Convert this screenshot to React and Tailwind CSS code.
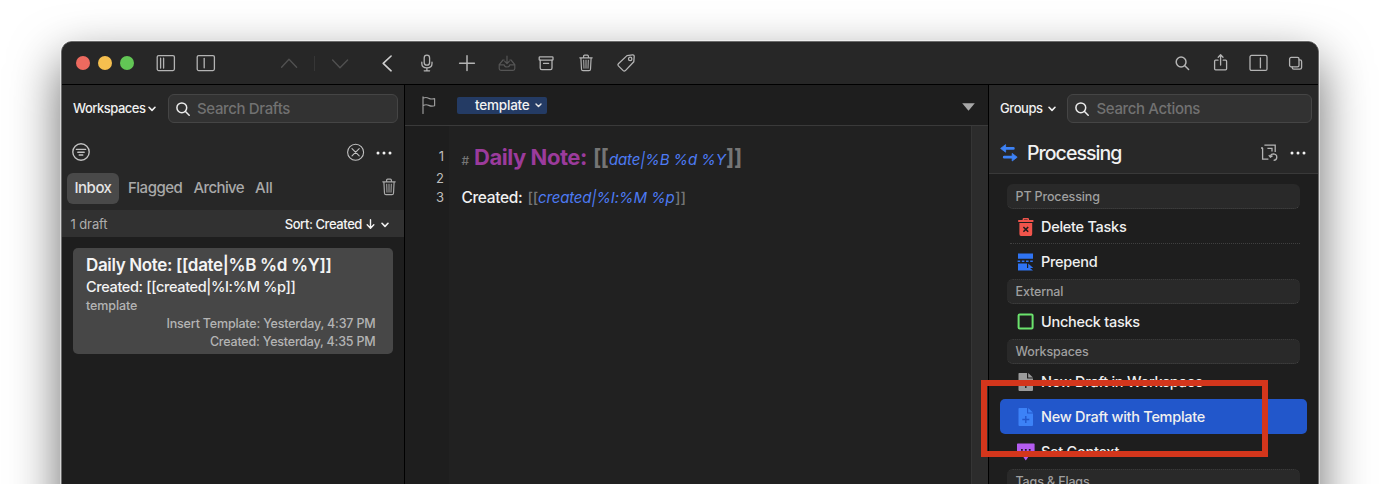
import React from "react";

function Icon({ w = 20, h = 20, className = "", sw = 1.3, children }) {
  return (
    <svg
      width={w}
      height={h}
      viewBox={`0 0 ${w} ${h}`}
      fill="none"
      stroke="currentColor"
      strokeWidth={sw}
      strokeLinecap="round"
      strokeLinejoin="round"
      className={`block shrink-0 ${className}`}
    >
      {children}
    </svg>
  );
}

function SearchIcon({ className, sw = 1.5 }) {
  return (
    <Icon w={14} h={14} sw={sw} className={className}>
      <circle cx="5.8" cy="5.8" r="4.9" />
      <path d="M9.5 9.5 13.2 13.2" />
    </Icon>
  );
}

function SmallChevron({ className }) {
  return (
    <Icon w={8} h={6} sw={1.6} className={className}>
      <path d="M1 1.3 4 4.4 7 1.3" />
    </Icon>
  );
}

function TrashIcon({ className, sw = 1.2 }) {
  return (
    <Icon className={className} sw={sw}>
      <path d="M3.8 4.8H16.2M7.6 4.6V3.2Q7.6 2.2 8.6 2.2H11.4Q12.4 2.2 12.4 3.2V4.6M4.9 5 5.5 16.2Q5.6 17.6 7 17.6H13Q14.4 17.6 14.5 16.2L15.1 5" />
      <path d="M7.7 7.2 8 15.2M10 7.2V15.2M12.3 7.2 12 15.2" strokeWidth="1" />
    </Icon>
  );
}

function Dots({ className }) {
  return (
    <svg width="16" height="4" viewBox="0 0 16 4" fill="#f2f2f2" className={`block shrink-0 ${className}`}>
      <circle cx="2" cy="2" r="1.5" />
      <circle cx="8" cy="2" r="1.5" />
      <circle cx="14" cy="2" r="1.5" />
    </svg>
  );
}

function Toolbar() {
  return (
    <div className="flex h-[42px] shrink-0 items-center bg-[#272727] pl-[14px] pr-[12px] text-[#b4b4b4]">
      <div className="flex gap-[8.5px]">
        <span className="size-[13.5px] rounded-full bg-[#ed6a5f]" />
        <span className="size-[13.5px] rounded-full bg-[#f5bf4f]" />
        <span className="size-[13.5px] rounded-full bg-[#62c655]" />
      </div>
      <Icon className="ml-[22.5px]">
        <rect x="1.2" y="2.6" width="17.2" height="15" rx="1.5" />
        <path d="M4.6 5.2V15M7.6 5.2V15" />
      </Icon>
      <Icon className="ml-[19.5px]">
        <rect x="1.2" y="2.6" width="17.2" height="15" rx="1.5" />
        <path d="M8.2 5.4V14.8" />
      </Icon>
      <Icon className="ml-[63.5px] text-[#505050]" sw={1.4}>
        <path d="M2.6 14.2 10 6.2 17.6 14.2" />
      </Icon>
      <span className="ml-[15px] h-[15px] w-px bg-[#363636]" />
      <Icon className="ml-[14.5px] text-[#505050]" sw={1.4}>
        <path d="M2.6 7 10 14.8 17.6 7" />
      </Icon>
      <Icon className="ml-[27px] text-[#cfcfcf]" sw={1.6}>
        <path d="M14.1 3 6.2 10.4 14.1 17.8" />
      </Icon>
      <Icon className="ml-[20.8px]">
        <rect x="7.2" y="2.2" width="5.4" height="10" rx="2.7" />
        <path d="M4.8 9.2V10.4Q4.8 14.8 9.9 14.8T15 10.4V9.2M9.9 14.8V17.8M7.2 17.8H12.6" />
      </Icon>
      <Icon className="ml-[19.7px]" sw={1.5}>
        <path d="M2.6 10.2H17.4M10 2.8V17.6" />
      </Icon>
      <Icon className="ml-[19.8px] text-[#555]" sw={1.2}>
        <path d="M7.2 7H6L2.2 11.6V15.6Q2.2 17.4 4 17.4H16Q17.8 17.4 17.8 15.6V11.6L14 7H12.8M2.2 11.8H7.2Q7.6 14 10 14T12.8 11.8H17.8M10 3V10.4M7.8 8.4 10 10.6 12.2 8.4" />
      </Icon>
      <Icon className="ml-[19.5px]">
        <rect x="3.2" y="3.8" width="13.8" height="3.4" rx="0.8" />
        <path d="M4.2 7.2V15Q4.2 16.6 5.8 16.6H14.4Q16 16.6 16 15V7.2M7.6 10.4H12.6" />
      </Icon>
      <TrashIcon className="ml-[20.2px]" />
      <Icon className="ml-[19.5px]">
        <path d="M11 2.6 16.6 1.9Q18.2 1.8 18.2 3.4L17.8 8.8 9.4 17.6Q8.2 18.6 7.2 17.6L2.4 12.9Q1.4 11.8 2.4 10.8Z" />
        <circle cx="14.2" cy="5.9" r="1.7" />
      </Icon>
      <div className="flex-1" />
      <Icon sw={1.5}>
        <circle cx="8.1" cy="9" r="4.9" />
        <path d="M11.8 12.7 15.6 16.5" />
      </Icon>
      <Icon className="ml-[18px]">
        <path d="M7 7.2H4.6Q3.6 7.2 3.6 8.2V15.8Q3.6 16.8 4.6 16.8H14.6Q15.6 16.8 15.6 15.8V8.2Q15.6 7.2 14.6 7.2H12.2M9.6 12V1.8M7.2 4.2 9.6 1.8 12 4.2" />
      </Icon>
      <Icon className="ml-[18px]">
        <rect x="1" y="2.4" width="17" height="15" rx="1.5" />
        <path d="M11.4 5V14.8" />
      </Icon>
      <Icon className="ml-[17px]">
        <rect x="3.6" y="4.4" width="9.4" height="9.4" rx="1.6" />
        <path d="M6.2 13.8V14.6Q6.2 16.2 7.8 16.2H13.8Q15.6 16.2 15.6 14.4V8.4Q15.6 6.8 14 6.8H13" />
      </Icon>
    </div>
  );
}

function SearchField({ label, className }) {
  return (
    <div
      className={`flex h-[29px] items-center rounded-[6px] border border-[#454545] bg-[#323232] pl-[7px] text-[15px] text-[#717171] ${className}`}
    >
      <SearchIcon className="mt-px mr-[7.5px] text-[#ececec]" />
      <span className="mt-[2px] font-[450] tracking-[-0.36px] whitespace-nowrap">{label}</span>
    </div>
  );
}

function DraftsPanel() {
  return (
    <div className="flex w-[342px] shrink-0 flex-col bg-[#1e1e1e]">
      <div className="flex h-[125px] shrink-0 flex-col bg-[#272727]">
        <div className="flex h-[46px] items-center pl-[11px] pr-[6px]">
          <span className="mt-[2px] w-[75px] text-[13px] font-medium tracking-[-0.5px] text-[#f0f0f0]">Workspaces</span>
          <SmallChevron className="mt-[2px] text-[#eee]" />
          <SearchField label="Search Drafts" className="ml-[11.5px] flex-1" />
        </div>
        <div className="flex h-[42px] items-center pl-[9px] pr-[12px] text-[#c0c0c0]">
          <Icon className="-mt-px" sw={1.4}>
            <circle cx="10" cy="10" r="8.2" />
            <path d="M5.4 7.4H14.6M6.8 10.2H13.2M8.2 13H11.8" />
          </Icon>
          <div className="flex-1" />
          <Icon className="mr-[10px]" sw={1.1}>
            <circle cx="9.6" cy="10.3" r="8" />
            <path d="M6 6.7 13.2 13.9M13.2 6.7 6 13.9" />
          </Icon>
          <Dots className="mt-[2px]" />
        </div>
        <div className="flex h-[31px] items-center pl-[5px] pr-[5px] text-[15px] font-[450] text-[#a9a9a9]">
          <span className="flex h-[31px] w-[52px] items-center justify-center rounded-[6px] bg-[#494949] tracking-[-0.5px] text-[#e4e4e4]">
            Inbox
          </span>
          <span className="ml-[9px] w-[65.5px] tracking-[-0.5px]">Flagged</span>
          <span className="w-[61.5px] tracking-[-0.6px]">Archive</span>
          <span className="tracking-[-0.2px]">All</span>
          <div className="flex-1" />
          <TrashIcon className="-mt-1" />
        </div>
      </div>
      <div className="flex h-[27px] shrink-0 items-center bg-[#313131] pl-[8.5px] pr-[15px] text-[13px]">
        <span className="mt-[2px] tracking-[-0.1px] text-[#adadad]">1 draft</span>
        <div className="flex-1" />
        <span className="mt-[2px] font-medium tracking-[-0.42px] text-[#f4f4f4]">Sort: Created</span>
        <Icon w={9} h={10} sw={1.4} className="ml-[4px] mr-[6px] text-[#f4f4f4]">
          <path d="M4.5 0.8V9M1.2 5.8 4.5 9.2 7.8 5.8" />
        </Icon>
        <SmallChevron className="mt-[2px] text-[#eee]" />
      </div>
      <div className="mt-[11px] ml-[11px] flex h-[106px] w-[320px] flex-col rounded-[5px] bg-[#474747] pt-[6px] pl-[13px] pr-[17.5px]">
        <span className="h-[22px] text-[17px] leading-[22px] font-semibold tracking-[-0.35px] whitespace-nowrap text-[#f4f4f4]">
          Daily Note: [[date|%B %d %Y]]
        </span>
        <span className="h-[21px] text-[14.5px] leading-[22px] font-[450] tracking-[-0.36px] whitespace-nowrap text-[#f4f4f4]">
          Created: [[created|%I:%M %p]]
        </span>
        <span className="h-[18px] text-[12.5px] leading-[17px] font-[450] tracking-[-0.1px] text-[#b4b4b4]">template</span>
        <span className="h-[17.5px] text-right text-[12.5px] leading-[17px] font-[450] tracking-[-0.19px] text-[#b4b4b4]">
          Insert Template: Yesterday, 4:37 PM
        </span>
        <span className="text-right text-[12.5px] leading-[17px] font-[450] tracking-[-0.2px] text-[#b4b4b4]">
          Created: Yesterday, 4:35 PM
        </span>
      </div>
    </div>
  );
}

function Editor() {
  return (
    <div className="flex w-[583px] shrink-0 flex-col bg-[#1e1e1e]">
      <div className="flex h-[41px] shrink-0 items-center border-b border-[#3a3a3a] pl-[16px] pr-[13px]">
        <Icon className="text-[#9a9a9a]" sw={1.2}>
          <path d="M2 1.8V18.4M2 3.2Q5 1.8 7.6 3.2T13.6 3.6V10.8Q10.6 11.8 7.8 10.4T2 10.6" />
        </Icon>
        <span className="ml-[16px] flex h-[17px] w-[90px] items-center rounded-[2px] bg-[#243b64] pl-[18px] text-[13.5px] font-medium tracking-[-0.2px] text-[#f2f2f2]">
          <span className="mt-px w-[60px]">template</span>
          <Icon w={7} h={5} sw={1.4} className="mt-px text-[#e4e4e4]">
            <path d="M1 1 3.5 3.6 6 1" />
          </Icon>
        </span>
        <div className="flex-1" />
        <svg width="13" height="8" viewBox="0 0 13 8" fill="#a8a8a8" className="mt-[3px] block">
          <path d="M0.2 0.2H12.8L6.5 7.8Z" />
        </svg>
      </div>
      <div className="flex flex-1">
        <div className="flex w-[44px] flex-col pt-[18px] pr-[5px] text-right text-[13px] text-[#bdbdbd]">
          <span className="h-[22px] leading-[24px]">1</span>
          <span className="h-[19px] leading-[24px]">2</span>
          <span className="leading-[24px]">3</span>
        </div>
        <div className="flex flex-1 flex-col bg-[#212121] pt-[14px] pl-[12.5px] text-[15px] font-[450] whitespace-pre">
          <div className="flex h-[46px] items-baseline leading-[34px]">
            <span className="w-[12.5px] text-[12px] text-[#767676]">#</span>
            <span className="w-[119px] text-[22px] font-bold tracking-[-0.45px] text-[#9b3b9c]">Daily Note:</span>
            <span className="w-[16px] text-[22px] font-bold tracking-[-0.8px] text-[#757575]">[[</span>
            <span className="w-[117px] tracking-[-0.15px] text-[#4d7bf3] italic">date|%B %d %Y</span>
            <span className="text-[22px] font-bold tracking-[-0.4px] text-[#757575]">]]</span>
          </div>
          <div className="flex items-baseline leading-[24px]">
            <span className="w-[66px] text-[15.5px] tracking-[-0.35px] text-[#f0f0f0]">Created:</span>
            <span className="w-[10.5px] tracking-[-0.3px] text-[#757575]">[[</span>
            <span className="w-[137px] tracking-[-0.15px] text-[#4d7bf3] italic">created|%I:%M %p</span>
            <span className="tracking-[-0.1px] text-[#757575]">]]</span>
          </div>
        </div>
        <div className="w-[17px] border-l border-[#353535] bg-[#2c2c2c]" />
      </div>
    </div>
  );
}

function SectionHeader({ label, first }) {
  return (
    <div
      className={`mx-[18px] flex h-[25px] items-center rounded-[6px] border-b border-dotted border-b-[#464646] bg-[#292929] pl-[8.5px] text-[12.5px] font-medium tracking-[-0.14px] text-[#9f9f9f] ${
        first ? "" : "border-t border-t-[#3a3a3a]"
      }`}
    >
      <span className="mt-[2px]">{label}</span>
    </div>
  );
}

function ActionRow({ icon, label, divider, selected, h = "h-[35px]" }) {
  return (
    <div className={`relative mx-[11px] flex items-center pt-[2px] pl-[16.5px] ${h} ${selected ? "rounded-[5px] bg-[#2257cb]" : ""}`}>
      {icon}
      <span className="-mt-px ml-[6.5px] text-[14.5px] font-[450] tracking-[-0.27px] whitespace-nowrap text-[#f0f0f0]">
        {label}
      </span>
      {divider && <span className="absolute right-[7px] bottom-0 left-[10px] border-b border-dotted border-[#404040]" />}
    </div>
  );
}

function Glyph({ children }) {
  return (
    <svg width="18" height="20" viewBox="0 0 18 20" className="-mt-px block shrink-0">
      {children}
    </svg>
  );
}

function DocGlyph({ fill, plus }) {
  return (
    <Glyph>
      <path d="M1.5 1.5Q1.5 1 2.2 1H10V6.6H16V18Q16 19 15 19H2.5Q1.5 19 1.5 18Z" fill={fill} />
      <path d="M11.2 1 16 5.5H11.2Z" fill={fill} />
      <path d="M8.8 9V16M5.3 12.5H12.3" stroke={plus} strokeWidth="1.4" />
    </Glyph>
  );
}

function ActionsPanel() {
  return (
    <div className="flex w-[329px] shrink-0 flex-col bg-[#1e1e1e]">
      <div className="flex h-[89px] shrink-0 flex-col border-b border-[#393939] bg-[#282828]">
        <div className="flex h-[46px] shrink-0 items-center pl-[11px] pr-[6px]">
          <span className="mt-[2px] w-[48px] text-[13px] font-medium tracking-[-0.42px] text-[#f0f0f0]">Groups</span>
          <SmallChevron className="mt-[2px] text-[#eee]" />
          <SearchField label="Search Actions" className="ml-[11px] flex-1" />
        </div>
        <div className="flex h-[42px] shrink-0 items-center pt-px pl-[11px] pr-[12px]">
          <svg width="18" height="18" viewBox="0 0 18 18" fill="none" stroke="#3d82f6" className="block">
            <path d="M5 4.4H13.4M4.2 13.2H12.6" strokeWidth="2.7" strokeLinecap="round" />
            <path d="M5.6 0.6V8.2L0.6 4.4ZM12.2 9.4V17L17.2 13.2Z" fill="#3d82f6" strokeWidth="0.8" strokeLinejoin="round" />
          </svg>
          <span className="mt-[2px] ml-[9px] text-[19.5px] font-medium tracking-[-0.95px] text-[#f2f2f2]">Processing</span>
          <div className="flex-1" />
          <svg width="18" height="18" viewBox="0 0 18 18" fill="none" stroke="#b4b4b4" strokeWidth="1.3" className="mr-[12px] block">
            <path d="M4.4 1.2H15.2V8M2.6 4V15.2H8.4M1 4H3M7.4 4.4H12V7.4" />
            <path d="M10.4 12.4Q10.8 9.9 13.5 9.9 16.8 10.2 16.8 13.2T13.6 16.4M8.8 11.2 10.4 13.2 12.6 11.8" />
          </svg>
          <Dots className="mt-px" />
        </div>
      </div>
      <div className="flex flex-col pt-[10px]">
        <SectionHeader first label="PT Processing" />
        <ActionRow
          divider
          label="Delete Tasks"
          icon={
            <Glyph>
              <path d="M5.6 4V2.2Q5.6 1 6.8 1H10.8Q12 1 12 2.2V4H10.6V2.4H7V4Z" fill="#f1544b" />
              <path d="M1.2 3H16.4V5H1.2ZM2.4 6H15.2V17Q15.2 19 13.6 19H4Q2.4 19 2.4 17Z" fill="#f1544b" />
              <path d="M6.4 10 11.2 14.8M11.2 10 6.4 14.8" stroke="#1e1e1e" strokeWidth="1.6" />
            </Glyph>
          }
        />
        <ActionRow
          label="Prepend"
          icon={
            <Glyph>
              <path d="M1 1.4H16V6.8H1ZM1 11.6H10V16H13L16 18.6H1ZM11.2 11.6 16 15.8V16H11.2Z" fill="#2f74f3" />
              <path d="M0.6 9.2H16.6" stroke="#2f74f3" strokeWidth="1.5" strokeDasharray="2.6 1.6" />
            </Glyph>
          }
        />
        <SectionHeader label="External" />
        <ActionRow
          h="h-[34.5px]"
          label="Uncheck tasks"
          icon={
            <Glyph>
              <rect x="1.6" y="2.6" width="14" height="14" rx="1" fill="none" stroke="#6be36d" strokeWidth="2" />
            </Glyph>
          }
        />
        <SectionHeader label="Workspaces" />
        <ActionRow label="New Draft in Workspace" icon={<DocGlyph fill="#9b9b9b" plus="#1e1e1e" />} />
        <ActionRow selected label="New Draft with Template" icon={<DocGlyph fill="#3c82f7" plus="#2257cb" />} />
        <ActionRow
          label="Set Context"
          icon={
            <Glyph>
              <path d="M0 2Q0 1.4 0.8 1.4H16.8Q17.6 1.4 17.6 2V14.6H11.6L8.8 18.6 6 14.6H0Z" fill="#b45cf0" />
              <path d="M4 7.8H5.8M7.9 7.8H9.7M11.8 7.8H13.6" stroke="#1e1e1e" strokeWidth="1.8" />
            </Glyph>
          }
        />
        <SectionHeader label="Tags & Flags" />
      </div>
    </div>
  );
}

export default function App() {
  return (
    <div className="relative h-[484px] w-[1380px] overflow-hidden bg-white pt-[41px] pl-[61px] font-['Inter','Liberation_Sans',sans-serif]">
      <div className="flex h-[600px] w-[1258px] flex-col overflow-hidden rounded-[11px] border border-[#6a6a6a] bg-[#272727] shadow-[0_0_0_1px_rgba(255,255,255,0.45),0_20px_50px_rgba(0,0,0,0.6)]">
        <Toolbar />
        <div className="h-px shrink-0 bg-black" />
        <div className="flex flex-1">
          <DraftsPanel />
          <div className="w-px bg-black" />
          <Editor />
          <div className="w-px bg-black" />
          <ActionsPanel />
        </div>
      </div>
      <div className="absolute top-[380px] left-[981px] h-[77px] w-[287px] border-[6px] border-[#d3361c]" />
    </div>
  );
}
